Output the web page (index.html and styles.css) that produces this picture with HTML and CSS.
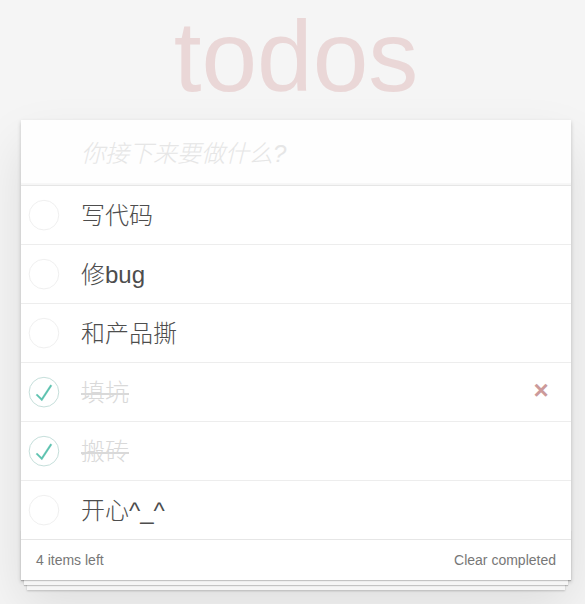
FILE: index.html
```
<!DOCTYPE html>
<html lang="zh-CN">
<head>
<meta charset="utf-8">
<meta name="viewport" content="width=device-width, initial-scale=1">
<title>todos</title>
<link rel="stylesheet" href="styles.css">
</head>
<body>
<svg class="sprite" aria-hidden="true">
  <symbol id="ring" viewBox="-10 -18 100 135">
    <circle cx="50" cy="50" r="50" fill="none" stroke="#ededed" stroke-width="3"/>
  </symbol>
  <symbol id="ring-done" viewBox="-10 -18 100 135">
    <circle cx="50" cy="50" r="50" fill="none" stroke="#bddad5" stroke-width="3"/>
    <path fill="#5dc2af" stroke="#5dc2af" d="M72 25L42 71 27 56l-4 4 20 20 34-52z"/>
  </symbol>
</svg>
<main class="page">
  <h1 class="title">todos</h1>
  <section class="todoapp">
    <input class="new-todo" type="text" placeholder="你接下来要做什么?" aria-label="你接下来要做什么?">
    <ul class="todo-list">
      <li class="todo">
        <span class="toggle"><input type="checkbox" id="t1"><svg class="mark"><use href="#ring"/></svg></span>
        <label for="t1">写代码</label>
      </li>
      <li class="todo">
        <span class="toggle"><input type="checkbox" id="t2"><svg class="mark"><use href="#ring"/></svg></span>
        <label for="t2">修bug</label>
      </li>
      <li class="todo">
        <span class="toggle"><input type="checkbox" id="t3"><svg class="mark"><use href="#ring"/></svg></span>
        <label for="t3">和产品撕</label>
      </li>
      <li class="todo done">
        <span class="toggle"><input type="checkbox" id="t4" checked><svg class="mark"><use href="#ring-done"/></svg></span>
        <label for="t4">填坑</label>
        <button class="destroy" type="button">×</button>
      </li>
      <li class="todo done">
        <span class="toggle"><input type="checkbox" id="t5" checked><svg class="mark"><use href="#ring-done"/></svg></span>
        <label for="t5">搬砖</label>
      </li>
      <li class="todo">
        <span class="toggle"><input type="checkbox" id="t6"><svg class="mark"><use href="#ring"/></svg></span>
        <label for="t6">开心^_^</label>
      </li>
    </ul>
    <footer class="footer">
      <span>4 items left</span>
      <button class="clear" type="button">Clear completed</button>
    </footer>
  </section>
</main>
</body>
</html>
```
FILE: styles.css
```
* {
  box-sizing: border-box;
}

body {
  margin: 0;
  background: #f5f5f5;
  color: #4d4d4d;
  font-family: "Liberation Sans", "Noto Sans CJK SC", sans-serif;
  font-size: 14px;
  font-weight: 300;
  line-height: 20px;
}

button {
  margin: 0;
  padding: 0;
  border: 0;
  background: none;
  color: inherit;
  font: inherit;
  cursor: pointer;
}

.sprite {
  display: none;
}

.page {
  min-height: 100vh;
  padding: 0 14px 24px 21px;
}

.title {
  margin: 0;
  height: 120px;
  color: rgba(175, 47, 47, 0.15);
  font-size: 100px;
  font-weight: 100;
  line-height: 112px;
  text-align: center;
}

.todoapp {
  background: #fff;
  box-shadow: 0 2px 4px 0 rgba(0, 0, 0, 0.2), 0 25px 50px 0 rgba(0, 0, 0, 0.1);
}

.new-todo {
  display: block;
  width: 100%;
  height: 65px;
  margin: 0;
  padding: 2px 16px 0 60px;
  border: 0;
  outline: 0;
  background: rgba(0, 0, 0, 0.003);
  box-shadow: inset 0 -2px 1px rgba(0, 0, 0, 0.03);
  color: inherit;
  font: inherit;
  font-size: 24px;
}

.new-todo::placeholder {
  color: #e6e6e6;
  font-style: italic;
  opacity: 1;
}

.todo-list {
  margin: 0;
  padding: 0;
  border-top: 1px solid #e6e6e6;
  list-style: none;
}

.todo {
  display: grid;
  grid-template-columns: 60px 1fr 50px;
  align-items: center;
  height: 59px;
  border-bottom: 1px solid #ededed;
  font-size: 24px;
  line-height: 30px;
}

.todo:last-child {
  height: 58px;
  border-bottom: 0;
}

.todo label {
  padding-top: 1px;
}

.toggle {
  display: grid;
  width: 40px;
  height: 40px;
}

.toggle input,
.mark {
  grid-area: 1 / 1;
  width: 40px;
  height: 40px;
  margin: 0;
}

.toggle input {
  appearance: none;
}

.mark {
  pointer-events: none;
}

.done label {
  color: #d9d9d9;
  text-decoration: line-through 2px;
}

.destroy {
  width: 40px;
  height: 40px;
  padding-bottom: 4px;
  color: #cc9a9a;
  font-size: 26px;
  font-weight: 700;
  line-height: 30px;
}

.footer {
  display: flex;
  justify-content: space-between;
  position: relative;
  padding: 10px 15px;
  border-top: 1px solid #e6e6e6;
  color: #777;
}

.footer::before {
  content: "";
  position: absolute;
  right: 0;
  bottom: 0;
  left: 0;
  height: 50px;
  box-shadow: 0 1px 1px rgba(0, 0, 0, 0.2),
    0 8px 0 -3px #f6f6f6,
    0 9px 1px -3px rgba(0, 0, 0, 0.2),
    0 16px 0 -6px #f6f6f6,
    0 17px 2px -6px rgba(0, 0, 0, 0.2);
  pointer-events: none;
}
```
